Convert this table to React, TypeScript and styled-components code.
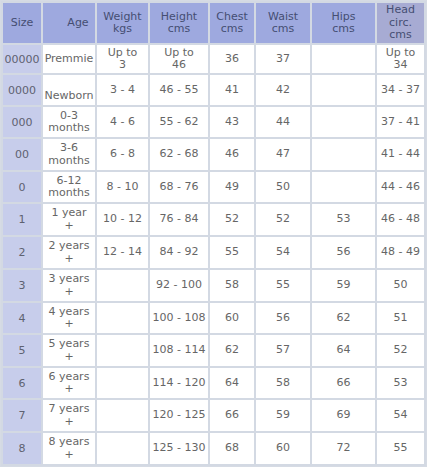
import React from "react";
import styled, { createGlobalStyle } from "styled-components";

const Global = createGlobalStyle`
  html, body { margin: 0; padding: 0; background: #ffffff; }
  body { font-family: "DejaVu Sans", Verdana, sans-serif; }
`;

type Cell = string | string[];

const columns = [38, 52, 51, 58, 44, 54, 63, 47];
const rowHeights = [40, 28, 30, 30, 31, 30, 31, 31, 31, 30, 31, 30, 31, 31];

const headers: { lines: string[]; muted?: boolean; shift?: number }[] = [
  { lines: ["Size"] },
  { lines: ["Age"], shift: 18 },
  { lines: ["Weight", "kgs"] },
  { lines: ["Height", "cms"] },
  { lines: ["Chest", "cms"] },
  { lines: ["Waist", "cms"] },
  { lines: ["Hips", "cms"] },
  { lines: ["Head", "circ.", "cms"], muted: true },
];

const rows: Cell[][] = [
  ["00000", ["Premmie"], ["Up to", "3"], ["Up to", "46"], "36", "37", "", ["Up to", "34"]],
  ["0000", ["", "Newborn"], "3 - 4", "46 - 55", "41", "42", "", "34 - 37"],
  ["000", ["0-3", "months"], "4 - 6", "55 - 62", "43", "44", "", "37 - 41"],
  ["00", ["3-6", "months"], "6 - 8", "62 - 68", "46", "47", "", "41 - 44"],
  ["0", ["6-12", "months"], "8 - 10", "68 - 76", "49", "50", "", "44 - 46"],
  ["1", ["1 year", "+"], "10 - 12", "76 - 84", "52", "52", "53", "46 - 48"],
  ["2", ["2 years", "+"], "12 - 14", "84 - 92", "55", "54", "56", "48 - 49"],
  ["3", ["3 years", "+"], "", "92 - 100", "58", "55", "59", "50"],
  ["4", ["4 years", "+"], "", "100 - 108", "60", "56", "62", "51"],
  ["5", ["5 years", "+"], "", "108 - 114", "62", "57", "64", "52"],
  ["6", ["6 years", "+"], "", "114 - 120", "64", "58", "66", "53"],
  ["7", ["7 years", "+"], "", "120 - 125", "66", "59", "69", "54"],
  ["8", ["8 years", "+"], "", "125 - 130", "68", "60", "72", "55"],
];

const Table = styled.div`
  display: grid;
  grid-template-columns: ${columns.map((c) => `${c}px`).join(" ")};
  grid-template-rows: ${rowHeights.map((h) => `${h}px`).join(" ")};
  gap: 2px;
  padding: 2px;
  border: 1px solid #d6dbe4;
  background: #d3d9e3;
  width: max-content;
`;

const HeadCell = styled.div<{ $muted?: boolean; $shift?: number }>`
  display: flex;
  flex-direction: column;
  align-items: center;
  justify-content: center;
  background: ${(p) => (p.$muted ? "#a7abd3" : "#9ea9df")};
  color: #454e72;
  font-size: 11px;
  line-height: 12.5px;
  text-align: center;
  padding-left: ${(p) => p.$shift ?? 0}px;
`;

const SizeCell = styled.div`
  display: flex;
  align-items: center;
  justify-content: center;
  background: #c7cdeb;
  color: #5e6270;
  font-size: 11px;
  line-height: 13px;
`;

const DataCell = styled.div`
  display: flex;
  flex-direction: column;
  align-items: center;
  justify-content: center;
  background: #ffffff;
  color: #666666;
  font-size: 11px;
  line-height: 12.5px;
  text-align: center;
  white-space: nowrap;
`;

const Line = styled.span`
  display: block;
  min-height: 12.5px;
`;

function renderLines(c: Cell) {
  const lines = Array.isArray(c) ? c : [c];
  return lines.map((l, i) => <Line key={i}>{l || "\u00a0"}</Line>);
}

export default function App() {
  return (
    <>
      <Global />
      <Table>
        {headers.map((h, i) => (
          <HeadCell key={`h${i}`} $muted={h.muted} $shift={h.shift}>
            {h.lines.map((l, j) => (
              <Line key={j}>{l}</Line>
            ))}
          </HeadCell>
        ))}
        {rows.map((r, ri) =>
          r.map((c, ci) =>
            ci === 0 ? (
              <SizeCell key={`${ri}-${ci}`}>{c as string}</SizeCell>
            ) : (
              <DataCell key={`${ri}-${ci}`}>{c === "" ? null : renderLines(c)}</DataCell>
            )
          )
        )}
      </Table>
    </>
  );
}
